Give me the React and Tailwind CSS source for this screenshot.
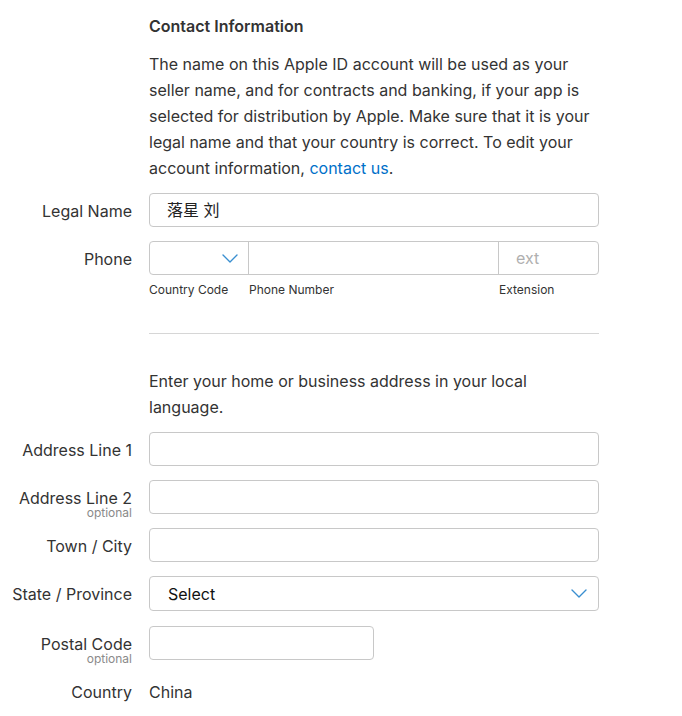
import React from 'react';

const font = { fontFamily: 'Inter, "Noto Sans CJK SC", sans-serif' };

const Chevron = ({ className }) => (
	<svg className={className} viewBox="0 0 16 9" fill="none">
		<path d="M1 1l7 7 7-7" stroke="#3a8fd0" strokeWidth="1.4" strokeLinecap="round" strokeLinejoin="round" />
	</svg>
);

const Label = ({ text, optional }) => (
	<div className="relative w-[132px] shrink-0 h-[34px] pt-[2px] flex items-center justify-end">
		<span className="leading-[18px] text-[16px] text-[#333]">{text}</span>
		{optional && <span className="absolute right-0 top-[27px] leading-[12px] text-[12px] text-[#8a8a8a]">optional</span>}
	</div>
);

const Row = ({ label, optional, children, className = '' }) => (
	<div className={`flex items-start gap-[17px] ${className}`}>
		<Label text={label} optional={optional} />
		{children}
	</div>
);

const TextBox = ({ value, width = 'w-[450px]' }) => (
	<div className={`${width} h-[34px] border border-[#c8c8c8] rounded-[4px] bg-white px-[17px] flex items-center text-[16px] text-[#222]`}>
		{value}
	</div>
);

const App = () => {
	return (
		<div className="min-h-screen bg-white pt-[14px] pb-8 text-[#333]" style={font}>
			<div className="ml-[149px] w-[450px]">
				<h3 className="text-[16px] leading-[24px] font-semibold text-[#333]">Contact Information</h3>
				<p className="mt-[13px] text-[16px] leading-[26px] text-[#333]">
					The name on this Apple ID account will be used as your seller name, and for contracts and banking, if your app is selected for distribution by Apple. Make sure that it is your legal name and that your country is correct. To edit your account information, <a className="text-[#0070c9]">contact us</a>.
				</p>
			</div>

			<Row label="Legal Name" className="mt-[12px]">
				<TextBox value="落星 刘" />
			</Row>

			<Row label="Phone" className="mt-[14px]">
				<div className="w-[450px]">
					<div className="h-[34px] border border-[#c8c8c8] rounded-[4px] flex">
						<div className="w-[99px] border-r border-[#c8c8c8] flex items-center justify-end pr-[10px]">
							<Chevron className="w-[16px] h-[9px]" />
						</div>
						<div className="w-[250px] border-r border-[#c8c8c8]"></div>
						<div className="flex-1 flex items-center pl-[17px] text-[16px] text-[#b0b0b0]">ext</div>
					</div>
					<div className="flex mt-[7px] text-[12px] leading-[16px] text-[#333]">
						<div className="w-[100px]">Country Code</div>
						<div className="w-[250px]">Phone Number</div>
						<div>Extension</div>
					</div>
				</div>
			</Row>

			<div className="ml-[149px] w-[450px]">
				<div className="mt-[35px] border-t border-[#d6d6d6]"></div>
				<p className="mt-[34px] text-[16px] leading-[26px] text-[#333]">
					Enter your home or business address in your local language.
				</p>
			</div>

			<Row label="Address Line 1" className="mt-[12px]">
				<TextBox />
			</Row>
			<Row label="Address Line 2" optional className="mt-[14px]">
				<TextBox />
			</Row>
			<Row label="Town / City" className="mt-[14px]">
				<TextBox />
			</Row>
			<Row label="State / Province" className="mt-[14px]">
				<div className="w-[450px] h-[35px] border border-[#c8c8c8] rounded-[4px] px-[18px] pr-[11px] flex items-center justify-between text-[16px] text-[#111]">
					<span>Select</span>
					<Chevron className="w-[16px] h-[9px]" />
				</div>
			</Row>
			<Row label="Postal Code" optional className="mt-[15px]">
				<TextBox width="w-[225px]" />
			</Row>
			<Row label="Country" className="mt-[14px]">
				<div className="h-[34px] pt-[2px] flex items-center text-[16px] text-[#333]">China</div>
			</Row>
		</div>
	);
};

export default App;
